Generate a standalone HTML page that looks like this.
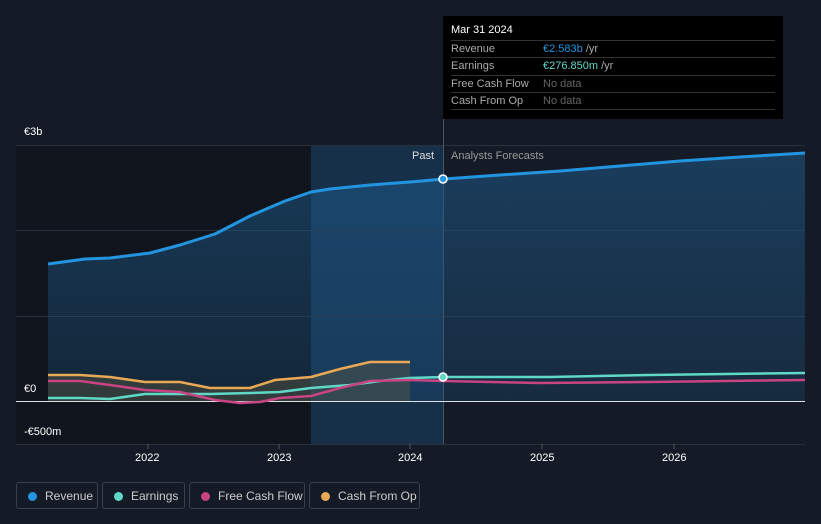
<!DOCTYPE html>
<html><head><meta charset="utf-8"><style>
html,body{margin:0;width:821px;height:524px;overflow:hidden}
body{background:#151b26;font-family:"Liberation Sans",sans-serif;position:relative}
.t{position:absolute;font-size:11px;color:#fff;white-space:nowrap}
.tip{position:absolute;left:443px;top:16px;width:340px;height:103px;background:#000}
.tip .r{position:absolute;left:8px;width:324px;border-top:1px solid #333;font-size:11px;color:#aaa;height:17px;line-height:17px;white-space:nowrap}
.lg{position:absolute;top:482px;height:27px;border:1px solid #3a404b;border-radius:3px;color:#ccc;font-size:12px;line-height:27px;box-sizing:border-box;padding-left:28px;white-space:nowrap}
.lg i{position:absolute;left:11px;top:9px;width:9px;height:9px;border-radius:50%}
</style></head><body>
<svg width="821" height="524" style="position:absolute;left:0;top:0">
<defs>
<linearGradient id="fa" x1="0" y1="0" x2="0" y2="1"><stop offset="0" stop-color="#1e5a8a" stop-opacity=".55"/><stop offset="1" stop-color="#1e5a8a" stop-opacity=".25"/></linearGradient>
</defs>
<rect x="16" y="145" width="295" height="299" fill="#10151d"/>
<rect x="311" y="145" width="133" height="299" fill="#16304a"/>
<g stroke="#2b313c" stroke-width="1">
<line x1="16" y1="145.5" x2="805" y2="145.5"/><line x1="16" y1="230.5" x2="805" y2="230.5"/><line x1="16" y1="316.5" x2="805" y2="316.5"/><line x1="16" y1="444.5" x2="805" y2="444.5"/>
</g>
<line x1="443.5" y1="16" x2="443.5" y2="444" stroke="#4a5566"/>
<path d="M48,264 L85,259 L110,258 L150,253 L180,245 L215,234 L250,216 L285,201 L311,192 L330,189 L370,185 L410,182 L444,179 L500,175 L560,171 L620,166 L680,161 L740,157 L805,153 L805,401 L48,401Z" fill="url(#fa)"/>
<path d="M48,375 L80,375 L110,377 L145,382 L180,382 L210,388 L250,388 L275,380 L311,377 L340,369 L370,362 L410,362 L410,401 L48,401Z" fill="#6a6040" opacity=".35"/>
<line x1="16" y1="401.5" x2="805" y2="401.5" stroke="#e0e0e0"/>
<g fill="none" stroke-width="2.5" stroke-linejoin="round">
<path d="M48,398 L80,398 L110,399 L145,394 L180,394 L210,394 L250,393 L280,392 L311,388 L350,385 L380,381 L410,378 L444,377 L550,377 L650,375 L805,373" stroke="#5fd8c8"/>
<path d="M48,381 L80,381 L110,385 L145,390 L180,392 L215,400 L240,403 L260,402 L280,398 L311,396 L340,388 L370,381 L410,380 L444,381 L540,383 L650,382 L805,380" stroke="#c84482"/>
<path d="M48,375 L80,375 L110,377 L145,382 L180,382 L210,388 L250,388 L275,380 L311,377 L340,369 L370,362 L410,362" stroke="#e8a855"/>
<path d="M48,264 L85,259 L110,258 L150,253 L180,245 L215,234 L250,216 L285,201 L311,192 L330,189 L370,185 L410,182 L444,179 L500,175 L560,171 L620,166 L680,161 L740,157 L805,153" stroke="#2394df" stroke-width="3"/>
</g>
<circle cx="443" cy="179" r="4" fill="#2394df" stroke="#fff" stroke-width="1.5"/>
<circle cx="443" cy="377" r="4" fill="#5fd8c8" stroke="#fff" stroke-width="1.5"/>
<g stroke="#555"><line x1="148" y1="444" x2="148" y2="449"/><line x1="279" y1="444" x2="279" y2="449"/><line x1="410" y1="444" x2="410" y2="449"/><line x1="542" y1="444" x2="542" y2="449"/><line x1="674" y1="444" x2="674" y2="449"/></g>
</svg>
<div class="t" style="left:24px;top:126px">€3b</div>
<div class="t" style="left:24px;top:383px">€0</div>
<div class="t" style="left:24px;top:426px">-€500m</div>
<div class="t" style="left:135px;top:452px">2022</div>
<div class="t" style="left:267px;top:452px">2023</div>
<div class="t" style="left:398px;top:452px">2024</div>
<div class="t" style="left:530px;top:452px">2025</div>
<div class="t" style="left:662px;top:452px">2026</div>
<div class="t" style="left:412px;top:150px;color:#ddd">Past</div>
<div class="t" style="left:451px;top:150px;color:#999">Analysts Forecasts</div>
<div class="tip">
<div style="position:absolute;left:8px;top:8px;color:#fff;font-size:11px">Mar 31 2024</div>
<div class="r" style="top:24px">Revenue<span style="position:absolute;left:92px"><span style="color:#2394df">€2.583b</span> /yr</span></div>
<div class="r" style="top:41px">Earnings<span style="position:absolute;left:92px"><span style="color:#5fd8c8">€276.850m</span> /yr</span></div>
<div class="r" style="top:59px">Free Cash Flow<span style="position:absolute;left:92px;color:#666">No data</span></div>
<div class="r" style="top:76px">Cash From Op<span style="position:absolute;left:92px;color:#666">No data</span></div>
<div class="r" style="top:93px;height:0"></div>
</div>
<div class="lg" style="left:16px;width:82px"><i style="background:#2394df"></i>Revenue</div>
<div class="lg" style="left:102px;width:83px"><i style="background:#5fd8c8"></i>Earnings</div>
<div class="lg" style="left:189px;width:116px"><i style="background:#c84482"></i>Free Cash Flow</div>
<div class="lg" style="left:309px;width:111px"><i style="background:#e8a855"></i>Cash From Op</div>
</body></html>
